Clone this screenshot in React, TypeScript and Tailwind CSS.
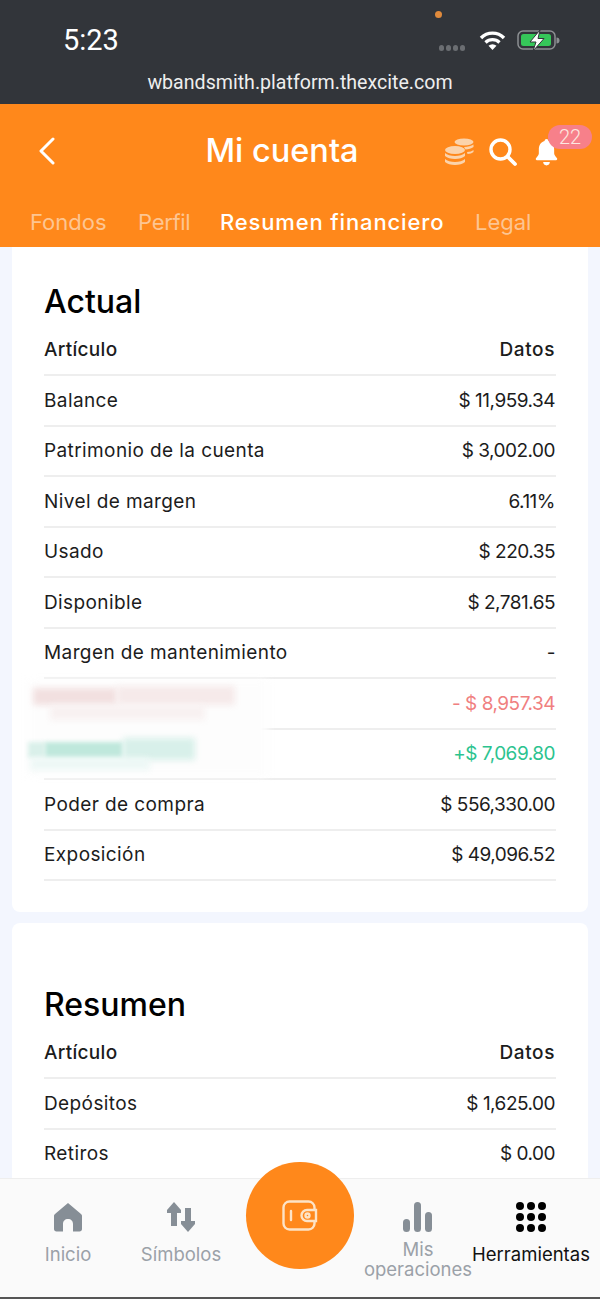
import React from 'react';

const font = 'font-[Inter,"Noto_Sans",sans-serif]';

const actual = [
  { label: 'Balance', value: '$ 11,959.34' },
  { label: 'Patrimonio de la cuenta', value: '$ 3,002.00' },
  { label: 'Nivel de margen', value: '6.11%' },
  { label: 'Usado', value: '$ 220.35' },
  { label: 'Disponible', value: '$ 2,781.65' },
  { label: 'Margen de mantenimiento', value: '-' },
  { label: '', value: '- $ 8,957.34', color: 'text-[#f08080]' },
  { label: '', value: '+$ 7,069.80', color: 'text-[#2cc38f]' },
  { label: 'Poder de compra', value: '$ 556,330.00' },
  { label: 'Exposición', value: '$ 49,096.52' },
];

const resumen = [
  { label: 'Depósitos', value: '$ 1,625.00' },
  { label: 'Retiros', value: '$ 0.00' },
];

type RowData = { label: string; value: string; color?: string };

const Row = ({ label, value, color }: RowData) => (
  <div className="h-[50.5px] pt-[1px] pr-[1px] flex items-center justify-between border-b-2 border-[#eeeeee] text-[19px] text-[#1c1c1c]">
    <span className="tracking-[0.4px]">{label}</span>
    <span className={`tracking-[-0.5px] ${color ?? ''}`}>{value}</span>
  </div>
);

const Table = ({ title, rows }: { title: string; rows: RowData[] }) => (
  <div>
    <h2 className="text-[32px] leading-[40px] mb-[4px] text-black font-medium">{title}</h2>
    <div className="h-[50px] pr-[1px] flex items-center justify-between border-b-2 border-[#eeeeee] text-[19px] font-medium text-[#1c1c1c] tracking-[0.3px]">
      <span>Artículo</span>
      <span className="tracking-[0.6px]">Datos</span>
    </div>
    {rows.map((r, i) => (
      <Row key={i} {...r} />
    ))}
  </div>
);

const App = () => {
  return (
    <div className={`w-[600px] h-[1299px] overflow-hidden relative flex flex-col bg-[#f3f6fe] ${font}`}>
      {/* status bar */}
      <div className="h-[104px] shrink-0 bg-[#32353a] relative text-white">
        <div className="absolute left-[63px] top-[24px] text-[29px] leading-[32px] font-[Roboto,sans-serif] font-normal">5:23</div>
        <div className="absolute left-[435px] top-[11px] w-[7px] h-[7px] rounded-full bg-[#e08a3c]"></div>
        <div className="absolute left-[439px] top-[45px] flex gap-[2px]">
          <span className="w-[5px] h-[6px] rounded-full bg-[#6b6e72]"></span>
          <span className="w-[5px] h-[6px] rounded-full bg-[#6b6e72]"></span>
          <span className="w-[5px] h-[6px] rounded-full bg-[#6b6e72]"></span>
          <span className="w-[5px] h-[6px] rounded-full bg-[#6b6e72]"></span>
        </div>
        <svg className="absolute left-[479px] top-[30px]" width="27" height="21" viewBox="0 0 27 21">
          <path d="M2 8 A16 16 0 0 1 25 8" fill="none" stroke="#fff" strokeWidth="3.4" />
          <path d="M6.5 12.5 A10 10 0 0 1 20.5 12.5" fill="none" stroke="#fff" strokeWidth="3.2" />
          <path d="M13.5 20 L9.5 15.8 A6 6 0 0 1 17.5 15.8 Z" fill="#fff" />
        </svg>
        <svg className="absolute left-[517px] top-[29px]" width="44" height="23" viewBox="0 0 44 23">
          <rect x="1" y="2" width="37" height="18" rx="5" fill="none" stroke="#8c8f92" strokeWidth="1.5" />
          <rect x="4" y="5" width="30" height="12" rx="2.5" fill="#35c759" />
          <path d="M39.5 8.5 a3 3 0 0 1 0 6 Z" fill="#8c8f92" />
          <path d="M23 1 L13 13 H19 L16 22 L27 9.5 H21 Z" fill="#fff" stroke="#32353a" strokeWidth="1" />
        </svg>
        <div className="absolute left-0 right-0 top-[70px] text-center text-[19.6px] leading-[26px] text-[#eeeeee] font-[Roboto,sans-serif]">
          wbandsmith.platform.thexcite.com
        </div>
      </div>

      {/* header */}
      <div className="h-[143px] shrink-0 bg-[#ff881b] relative text-white">
        <div className="h-[93px] flex items-center justify-center pr-[36px] pt-[2px] text-[32.5px] font-medium">Mi cuenta</div>
        <svg className="absolute left-[38px] top-[33px]" width="18" height="28" viewBox="0 0 18 28" fill="none">
          <path d="M15 2 L3 14 L15 26" stroke="#fff" strokeWidth="3" strokeLinecap="round" strokeLinejoin="round" />
        </svg>
        <svg className="absolute left-[443px] top-[33px]" width="32" height="30" viewBox="0 0 32 30" fill="#fbd3ab">
          <ellipse cx="21" cy="5" rx="9.5" ry="3.5" />
          <path d="M21 10 c4 0 7-1 9.5-2.5 V10 c-2 1.5-5 2.5-8 2.5Z" />
          <path d="M24 15 c3 0 5-1 6.5-2 V15 c-1.500 1-3.500 2-6 2Z" />
          <ellipse cx="12" cy="13" rx="10" ry="4" />
          <path d="M2 16 c2 2 6 3 10 3 s8-1 10-3 v3 c-2 2-6 3-10 3 s-8-1-10-3Z" />
          <path d="M2 22 c2 2 6 3 10 3 s8-1 10-3 v3 c-2 2-6 3-10 3 s-8-1-10-3Z" />
        </svg>
        <svg className="absolute left-[488px] top-[33px]" width="30" height="30" viewBox="0 0 30 30" fill="none">
          <circle cx="12.500" cy="12.500" r="9.500" stroke="#fff" strokeWidth="3.400" />
          <path d="M20 20 L27 27" stroke="#fff" strokeWidth="3.800" strokeLinecap="round" />
        </svg>
        <svg className="absolute left-[535px] top-[34px]" width="23" height="29" viewBox="0 0 24 30" fill="#fff">
          <path d="M12 1 c1.200 0 2 .8 2 2 c4 1 6 4.500 6 9 v4 c0 2 2 3.500 3 5 c.5 1 0 2-1 2 H2 c-1 0-1.500-1-1-2 c1-1.500 3-3 3-5 v-4 c0-4.500 2-8 6-9 c0-1.200.8-2 2-2Z" />
          <path d="M8.500 25 h7 c0 2-1.500 3.500-3.500 3.500 s-3.500-1.500-3.500-3.500Z" />
        </svg>
        <div className="absolute left-[548px] top-[21px] w-[44px] h-[24px] rounded-full bg-[#f7808a] text-[#fde8e0] text-[20px] leading-[24px] text-center font-[Roboto,sans-serif] font-light">22</div>
        <div className="absolute left-0 top-[103px] h-[30px] w-full text-[22px] leading-[30px]">
          <span className="absolute left-[30px] text-[#fdc592]">Fondos</span>
          <span className="absolute left-[138px] text-[#fdc592] tracking-[-0.3px]">Perfil</span>
          <span className="absolute left-[220px] font-medium tracking-[0.85px]">Resumen financiero</span>
          <span className="absolute left-[475px] text-[#fdc592]">Legal</span>
        </div>
      </div>

      {/* content */}
      <div className="flex-1 overflow-hidden px-[12px] flex flex-col gap-[11px] min-h-0">
        <div className="relative bg-white rounded-b-[8px] px-[32px] pt-[35px] pb-[31px] shrink-0">
          <Table title="Actual" rows={actual} />
          {/* blurred out labels */}
          <div className="absolute left-[16px] top-[433px] w-[240px] h-[96px] bg-[#fdfdfd] blur-[5px]"></div>
          <div className="absolute left-[21px] top-[441px] w-[84px] h-[17px] bg-[#f2e0e0] blur-[3px]"></div>
          <div className="absolute left-[105px] top-[439px] w-[118px] h-[19px] bg-[#f6eaea] blur-[3px]"></div>
          <div className="absolute left-[38px] top-[458px] w-[155px] h-[15px] bg-[#f8f1f1] blur-[3px]"></div>
          <div className="absolute left-[16px] top-[495px] w-[17px] h-[16px] bg-[#daf0ea] blur-[2px]"></div>
          <div className="absolute left-[33px] top-[495px] w-[78px] h-[16px] bg-[#bfe8dc] blur-[2px]"></div>
          <div className="absolute left-[111px] top-[491px] w-[72px] h-[22px] bg-[#d8f0ea] blur-[3px]"></div>
          <div className="absolute left-[18px] top-[511px] w-[120px] h-[12px] bg-[#edf8f6] blur-[3px]"></div>
        </div>
        <div className="flex-1 bg-white rounded-t-[8px] px-[32px] pt-[62px]">
          <Table title="Resumen" rows={resumen} />
        </div>
      </div>

      {/* bottom nav */}
      <div className="h-[121px] shrink-0 bg-[#fafafa] border-t border-[#eeeeee] border-b-2 border-b-[#555555] relative text-[18.5px] leading-[20px] text-[#9ba1a8] flex">
        <div className="w-[136px] flex flex-col items-center pt-[23px] gap-[12px]">
          <svg width="30" height="30" viewBox="0 0 30 30" fill="#868e96">
            <path d="M15 1 L28 12 C28.500 12.500 29 13 29 14 V27 C29 28.500 28 29.500 26.500 29.500 H20 V22 C20 19 18 17 15 17 S10 19 10 22 V29.500 H3.500 C2 29.500 1 28.500 1 27 V14 C1 13 1.500 12.500 2 12Z" />
          </svg>
          <span className="whitespace-nowrap">Inicio</span>
        </div>
        <div className="w-[90px] flex flex-col items-center pt-[23px] gap-[12px]">
          <svg width="30" height="30" viewBox="0 0 30 30" fill="#868e96">
            <path d="M8 0 L15 8 V11 H11 V24 H5 V11 H1 V8Z" />
            <path d="M22 30 L29 22 V19 H25 V6 H19 V19 H15 V22Z" />
          </svg>
          <span className="whitespace-nowrap">Símbolos</span>
        </div>
        <div className="w-[140px]"></div>
        <div className="w-[104px] flex flex-col items-center pt-[23px] gap-[7px] text-center">
          <svg width="30" height="30" viewBox="0 0 30 30" fill="#868e96">
            <rect x="0" y="17" width="7" height="13" rx="3.500" />
            <rect x="11" y="0" width="7" height="30" rx="3.500" />
            <rect x="22" y="10" width="7" height="20" rx="3.500" />
          </svg>
          <span className="whitespace-nowrap">Mis<br />operaciones</span>
        </div>
        <div className="w-[122px] flex flex-col items-center pt-[23px] gap-[12px] text-[#111111]">
          <svg width="30" height="30" viewBox="0 0 30 30" fill="#000">
            <circle cx="4" cy="4" r="4" /><circle cx="15" cy="4" r="4" /><circle cx="26" cy="4" r="4" />
            <circle cx="4" cy="15" r="4" /><circle cx="15" cy="15" r="4" /><circle cx="26" cy="15" r="4" />
            <circle cx="4" cy="26" r="4" /><circle cx="15" cy="26" r="4" /><circle cx="26" cy="26" r="4" />
          </svg>
          <span className="whitespace-nowrap">Herramientas</span>
        </div>
        <div className="absolute left-[246px] top-[-17px] w-[108px] h-[107px] rounded-full bg-[#ff881b] flex items-center justify-center">
          <svg width="36" height="32" viewBox="0 0 36 32" fill="none" stroke="#fde3c6" strokeWidth="2.400">
            <rect x="1.500" y="1.500" width="31" height="28" rx="6" />
            <path d="M9 11 V20" strokeLinecap="round" />
            <path d="M34 10 H25 a5.500 5.500 0 0 0 0 11 H34 Z" fill="#ff881b" />
            <circle cx="25.500" cy="15.500" r="2" />
          </svg>
        </div>
      </div>
    </div>
  );
};

export default App;
